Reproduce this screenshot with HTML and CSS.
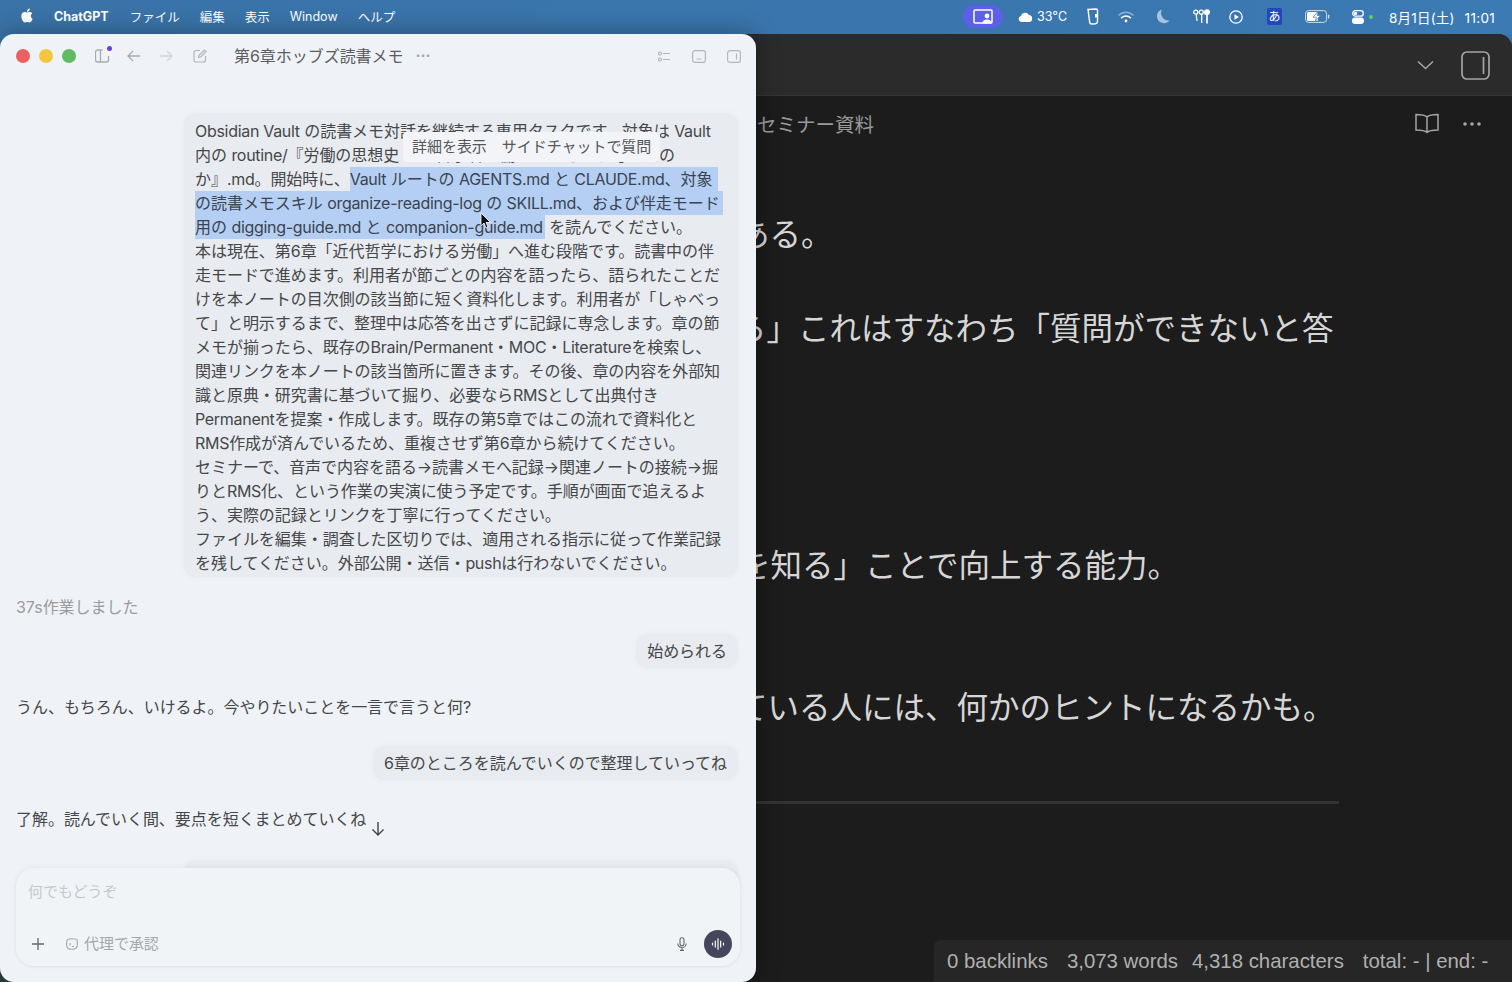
FILE: index.html

```html
<!DOCTYPE html>
<html lang="ja">
<head>
<meta charset="utf-8">
<title>第6章ホッブズ読書メモ</title>
<link rel="stylesheet" href="styles.css">
</head>
<body>

<!-- menu bar -->
<header class="menubar">
  <nav class="menu-left">
    <svg class="apple" viewBox="0 0 24 24"><path d="M12.152 6.896c-.948 0-2.415-1.078-3.96-1.04-2.04.027-3.91 1.183-4.961 3.014-2.117 3.675-.546 9.103 1.519 12.09 1.013 1.454 2.208 3.09 3.792 3.039 1.52-.065 2.09-.987 3.935-.987 1.831 0 2.35.987 3.96.948 1.637-.026 2.676-1.48 3.676-2.948 1.156-1.688 1.636-3.325 1.662-3.415-.039-.013-3.182-1.221-3.22-4.857-.026-3.04 2.48-4.494 2.597-4.559-1.429-2.09-3.623-2.324-4.39-2.376-2-.156-3.675 1.09-4.61 1.09zM15.53 3.83c.843-1.012 1.4-2.427 1.245-3.83-1.207.052-2.662.805-3.532 1.818-.78.896-1.454 2.338-1.273 3.714 1.338.104 2.715-.688 3.559-1.701"/></svg>
    <b class="app-name">ChatGPT</b>
    <span>ファイル</span>
    <span>編集</span>
    <span>表示</span>
    <span>Window</span>
    <span>ヘルプ</span>
  </nav>
  <div class="status">
    <span class="st-pill">
      <svg width="20" height="16" viewBox="0 0 20 16"><rect x="1" y="1" width="18" height="13" rx="1" fill="none" stroke="#fff" stroke-width="1.5"/><circle cx="14" cy="7" r="2.4" fill="#fff"/><path d="M9.500 14.500c0-3 2-4 4.500-4s4.500 1 4.500 4z" fill="#fff"/></svg>
    </span>
    <span class="st-weather">
      <svg width="15" height="10" viewBox="0 0 15 10"><path d="M3.500 10a3 3 0 0 1-.6-5.900 4.300 4.300 0 0 1 8-1A3.500 3.500 0 0 1 11.500 10z" fill="#fff"/></svg>
      33°C
    </span>
    <svg class="st-note" width="12" height="17" viewBox="0 0 12 17" fill="none" stroke="#fff" stroke-width="1.4"><path d="M1 1.500 9 1c1 0 1.500.5 1.500 1.500v11c0 1.500-.8 2-2 2.200l-4 .3c-1 0-1.500-.5-1.800-1.500z"/><rect x="8" y="6" width="3" height="3.500" fill="#fff" stroke="none"/></svg>
    <svg class="st-wifi" width="16" height="12" viewBox="0 0 16 12" fill="none" stroke="#fff" stroke-linecap="round"><path d="M1 4a10 10 0 0 1 14 0" stroke-width="1.500" opacity=".45"/><path d="M3.500 6.800a6.500 6.500 0 0 1 9 0" stroke-width="1.500"/><circle cx="8" cy="10" r="1.400" fill="#fff" stroke="none"/></svg>
    <svg class="st-moon" width="13" height="15" viewBox="0 0 13 15"><path d="M5 .5a7 7 0 1 0 7.500 11A7.500 7.500 0 0 1 5 .5z" fill="#a9c4e0"/></svg>
    <svg class="st-pods" width="17" height="15" viewBox="0 0 17 15" fill="none" stroke="#fff" stroke-width="1.300"><circle cx="2.800" cy="3.200" r="2"/><path d="M3.200 5.500 4 12"/><circle cx="8.300" cy="3.200" r="2"/><path d="M8.700 5.500v8.500"/><circle cx="14" cy="3.200" r="2.400" fill="#fff"/><path d="M14 5.500v9" stroke-width="1.700"/></svg>
    <svg class="st-play" width="14" height="14" viewBox="0 0 14 14"><circle cx="7" cy="7" r="6.200" fill="none" stroke="#fff" stroke-width="1.300"/><path d="M5.500 4.300 9.800 7 5.500 9.700z" fill="#fff"/></svg>
    <span class="st-ime">あ</span>
    <svg class="st-batt" width="25" height="13" viewBox="0 0 25 13"><rect x=".6" y=".6" width="21" height="11.800" rx="3" fill="none" stroke="#cfdcea" stroke-width="1"/><rect x="2" y="2" width="11" height="9" rx="1.500" fill="#fff"/><path d="M13 1.500 8 7.200h3.500L10 11.500l5.500-6H12z" fill="#fff" stroke="#3b78b0" stroke-width=".7"/><rect x="23" y="4.500" width="1.300" height="4" rx=".6" fill="#cfdcea"/></svg>
    <svg class="st-ctrl" width="12" height="14" viewBox="0 0 12 14"><rect x=".7" y=".7" width="10.600" height="5.400" rx="2.700" fill="none" stroke="#fff" stroke-width="1.300"/><circle cx="3.500" cy="3.400" r="1.700" fill="#fff"/><rect y="7.500" width="12" height="6.500" rx="3.200" fill="#fff"/></svg>
    <i class="st-dot"></i>
    <span class="st-clock">8月1日(土)<span class="st-time">11:01</span></span>
  </div>
</header>

<!-- desktop with the two windows -->
<main class="desktop">

  <section class="note-window">
    <div class="note-bar">
      <svg width="17" height="10" viewBox="0 0 17 10" fill="none" stroke="#a5a5a5" stroke-width="1.600"><path d="M1 1.500 8.500 8.500 16 1.500"/></svg>
      <svg class="panel-btn" width="29" height="29" viewBox="0 0 29 29" fill="none" stroke="#a5a5a5" stroke-width="1.700"><rect x="1" y="1" width="27" height="27" rx="5"/><path d="M22.500 6v17"/></svg>
    </div>
    <div class="note-head">
      <span class="note-path">セミナー資料</span>
      <div class="note-actions">
        <svg width="24" height="21" viewBox="0 0 24 21" fill="none" stroke="#a5a5a5" stroke-width="1.500"><path d="M12 4C10 2 6 1.500 1 1.500v15.500c5 0 9 .5 11 2.500 2-2 6-2.500 11-2.500V1.500C18 1.500 14 2 12 4zM12 4v15.500"/></svg>
        <svg width="18" height="4" viewBox="0 0 18 4" fill="#a5a5a5"><circle cx="2" cy="2" r="1.800"/><circle cx="9" cy="2" r="1.800"/><circle cx="16" cy="2" r="1.800"/></svg>
      </div>
    </div>
    <article class="note-body">
      <p class="line-a">ある。</p>
      <p class="line-b">ら」これはすなわち「質問ができないと答</p>
      <p class="line-c">を知る」ことで向上する能力。</p>
      <p class="line-d">ている人には、何かのヒントになるかも。</p>
      <hr class="note-rule">
    </article>
    <footer class="note-status">
      <span>0 backlinks</span>
      <span>3,073 words</span>
      <span class="near">4,318 characters</span>
      <span>total: - | end: -</span>
    </footer>
  </section>

  <section class="chat-window">
    <div class="chat-bar">
      <div class="lights"><i class="red"></i><i class="yellow"></i><i class="green"></i></div>
      <span class="sidebar-btn">
        <svg width="15" height="14" viewBox="0 0 15 14" fill="none" stroke="#aaa" stroke-width="1.300"><path d="M13.500 7v4a2 2 0 0 1-2 2h-9a2 2 0 0 1-2-2V3a2 2 0 0 1 2-2h5M5.500 1v12"/></svg>
        <i></i>
      </span>
      <svg class="nav-back" width="14" height="12" viewBox="0 0 14 12" fill="none" stroke="#aaa" stroke-width="1.300"><path d="M13 6H1M6 1 1 6l5 5"/></svg>
      <svg class="nav-fwd" width="14" height="12" viewBox="0 0 14 12" fill="none" stroke="#d2d4d8" stroke-width="1.300"><path d="M1 6h12M8 1l5 5-5 5"/></svg>
      <svg class="nav-edit" width="14" height="14" viewBox="0 0 14 14" fill="none" stroke="#b4b6ba" stroke-width="1.200"><path d="M7 1.500H3a2 2 0 0 0-2 2V11a2 2 0 0 0 2 2h7.500a2 2 0 0 0 2-2V7M5.500 8.500 6 6.300 11.500 1l1.500 1.500L7.700 8z"/></svg>
      <h1 class="chat-title">第6章ホッブズ読書メモ</h1>
      <span class="title-more">···</span>
      <div class="bar-right">
        <svg width="13" height="11" viewBox="0 0 13 11" fill="none" stroke="#b4b6ba" stroke-width="1.200"><circle cx="2" cy="2.500" r="1.500"/><circle cx="2" cy="8.500" r="1.500"/><path d="M5 2.500h7M5 8.500h7"/></svg>
        <svg width="14" height="13" viewBox="0 0 14 13" fill="none" stroke="#b4b6ba" stroke-width="1.200"><rect x=".6" y=".6" width="12.800" height="11.800" rx="2.500"/><path d="M4.500 9h5"/></svg>
        <svg width="14" height="13" viewBox="0 0 14 13" fill="none" stroke="#b4b6ba" stroke-width="1.200"><rect x=".6" y=".6" width="12.800" height="11.800" rx="2.500"/><path d="M9.500 3.500v6"/></svg>
      </div>
    </div>

    <div class="chat-log">
      <div class="bubble bubble-long">
        <span class="en">Obsidian Vault</span> の読書メモ対話を継続する専用タスクです。対象は <span class="en">Vault</span><br>
        内の <span class="en">routine/</span>『労働の思想史 ――哲学者は働くことをどう考えたの<br>
        か』<span class="en">.md</span>。開始時に、<span class="sel sel-a"><span class="en">Vault</span> ルートの <span class="en">AGENTS.md</span> と <span class="en">CLAUDE.md</span>、対象</span><br>
        <span class="sel sel-b">の読書メモスキル <span class="en">organize-reading-log</span> の <span class="en">SKILL.md</span>、および伴走モード</span><br>
        <span class="sel sel-c">用の <span class="en">digging-guide.md</span> と <span class="en">companion-guide.md</span></span> を読んでください。<br>
        本は現在、第6章「近代哲学における労働」へ進む段階です。読書中の伴<br>
        走モードで進めます。利用者が節ごとの内容を語ったら、語られたことだ<br>
        けを本ノートの目次側の該当節に短く資料化します。利用者が「しゃべっ<br>
        て」と明示するまで、整理中は応答を出さずに記録に専念します。章の節<br>
        メモが揃ったら、既存の<span class="en">Brain/Permanent</span>・<span class="en">MOC</span>・<span class="en">Literature</span>を検索し、<br>
        関連リンクを本ノートの該当箇所に置きます。その後、章の内容を外部知<br>
        識と原典・研究書に基づいて掘り、必要なら<span class="en">RMS</span>として出典付き<br>
        <span class="en">Permanent</span>を提案・作成します。既存の第5章ではこの流れで資料化と<br>
        <span class="en">RMS</span>作成が済んでいるため、重複させず第6章から続けてください。<br>
        セミナーで、音声で内容を語る→読書メモへ記録→関連ノートの接続→掘<br>
        りと<span class="en">RMS</span>化、という作業の実演に使う予定です。手順が画面で追えるよ<br>
        う、実際の記録とリンクを丁寧に行ってください。<br>
        ファイルを編集・調査した区切りでは、適用される指示に従って作業記録<br>
        を残してください。外部公開・送信・<span class="en">push</span>は行わないでください。
      </div>
      <p class="worked">37s作業しました</p>
      <div class="bubble bubble-short">始められる</div>
      <p class="reply">うん、もちろん、いけるよ。今やりたいことを一言で言うと何?</p>
      <div class="bubble bubble-short gap-big">6章のところを読んでいくので整理していってね</div>
      <p class="reply">了解。読んでいく間、要点を短くまとめていくね</p>
      <div class="bubble bubble-next">&nbsp;</div>
    </div>

    <!-- things lying over the log -->
    <div class="popover"><span>詳細を表示</span><span>サイドチャットで質問</span></div>
    <svg class="pointer" width="12" height="18" viewBox="0 0 12 18"><path d="M1 1v13l3-3 2 5 2-1-2-4.500h4.500z" fill="#111" stroke="#fff" stroke-width=".8"/></svg>
    <svg class="down-arrow" width="14" height="15" viewBox="0 0 14 15" fill="none" stroke="#444" stroke-width="1.400"><path d="M7 1v13M1.500 8.500 7 14l5.500-5.500"/></svg>

    <div class="composer">
      <div class="composer-input">何でもどうぞ</div>
      <div class="composer-tools">
        <svg class="plus" width="12" height="12" viewBox="0 0 12 12" stroke="#666" stroke-width="1.300"><path d="M6 0v12M0 6h12"/></svg>
        <svg class="approve-icon" width="12" height="13" viewBox="0 0 12 13" fill="none" stroke="#a5a7aa" stroke-width="1.100"><path d="M6 .8c3 0 5.200.6 5.200 1.500 0 1 .2 2.500.2 4 0 3-2.200 5-5.400 5S.6 10.300.6 7.300c0-1.500.2-3 .2-4C.8 1.400 3 .8 6 .8zM4 5v2.500M6 8.500h2"/></svg>
        <span class="approve">代理で承認</span>
        <svg class="mic" width="10" height="14" viewBox="0 0 10 14" fill="none" stroke="#666" stroke-width="1.100"><rect x="3" y=".7" width="4" height="8" rx="2"/><path d="M.8 6.500a4.200 4.200 0 0 0 8.400 0M5 10.700V13.500M3 13.400h4"/></svg>
        <span class="voice">
          <svg width="14" height="12" viewBox="0 0 14 12" stroke="#fff" stroke-width="1.200" stroke-linecap="round"><path d="M1.500 5v2M4.300 3v6M7 .8v10.400M9.700 3v6M12.500 5v2"/></svg>
        </span>
      </div>
    </div>
  </section>

</main>

</body>
</html>
```

FILE: styles.css

```css
* { box-sizing: border-box; }

html, body { height: 100%; margin: 0; }

body {
  display: flex;
  flex-direction: column;
  overflow: hidden;
  font-family: Inter, "Noto Sans CJK JP", sans-serif;
  background: #3a74a9;
}

p, h1 { margin: 0; font-weight: normal; }

/* menu bar */
.menubar {
  height: 34px;
  flex: none;
  display: flex;
  justify-content: space-between;
  align-items: center;
  padding: 0 17px 1px 20px;
  color: #fff;
  font-size: 12.500px;
  background: linear-gradient(90deg, #3a73a8, #3a76ad 60%, #3c7ab4);
}
.menu-left { display: flex; align-items: center; gap: 20px; }
.apple { width: 14px; height: 15px; fill: #fff; margin-bottom: 2px; }
.app-name { margin-right: 1px; font-weight: 700; }

.status { display: flex; align-items: center; }
.st-pill {
  width: 40px;
  height: 23px;
  display: flex;
  align-items: center;
  justify-content: center;
  border-radius: 12px;
  background: #5c60e6;
}
.st-weather { display: flex; align-items: center; gap: 4px; margin-left: 15px; }
.st-note { margin-left: 20px; }
.st-wifi { margin-left: 19px; }
.st-moon { margin-left: 23px; }
.st-pods { margin-left: 23px; }
.st-play { margin-left: 19px; }
.st-ime {
  width: 15px;
  height: 17px;
  margin-left: 24px;
  text-align: center;
  font-size: 12px;
  line-height: 17px;
  border-radius: 2px;
  background: #2146c0;
}
.st-batt { margin-left: 23px; }
.st-ctrl { margin-left: 22px; }
.st-dot { width: 4px; height: 4px; margin-left: 5px; border-radius: 50%; background: #5fce68; }
.st-clock { display: flex; align-items: baseline; margin-left: 16px; font-size: 13.500px; letter-spacing: .2px; }
.st-time { margin-left: 10px; letter-spacing: .3px; }

/* desktop */
.desktop {
  position: relative;
  flex: 1;
  background: linear-gradient(#3a74a9 60%, #2c403e 95%);
}

/* dark note window */
.note-window {
  position: absolute;
  inset: 0 0 0 30px;
  display: flex;
  flex-direction: column;
  overflow: hidden;
  border-radius: 14px 14px 0 0;
  background: #1c1c1d;
}
.note-bar {
  height: 62px;
  flex: none;
  display: flex;
  justify-content: flex-end;
  align-items: center;
  gap: 27px;
  padding: 0 22px 0 0;
  background: #2b2b2c;
  border-bottom: 1px solid #363636;
}
.panel-btn { margin-top: 1px; }
.note-head {
  height: 55px;
  flex: none;
  display: flex;
  justify-content: space-between;
  align-items: center;
  padding: 0 31px 0 727px;
}
.note-path { color: #9a9a9a; font-size: 19.500px; }
.note-actions { display: flex; align-items: center; gap: 24px; }

.note-body { flex: 1; padding-left: 708px; color: #d6d6d6; font-size: 31.500px; line-height: 44px; }
.note-body p { white-space: nowrap; }
.line-a { margin-top: 62px; }
.line-b { margin-top: 50px; margin-left: -3px; }
.line-c { margin-top: 193px; margin-left: 1px; }
.line-d { margin-top: 98px; margin-left: -2px; }
.note-rule {
  width: 601px;
  height: 3px;
  margin: 71px 0 0;
  border: 0;
  background: #333;
}

.note-status {
  position: absolute;
  right: 0;
  bottom: 0;
  width: 578px;
  height: 42px;
  display: flex;
  align-items: center;
  gap: 19px;
  padding-left: 13px;
  color: #b0b0b0;
  font-family: "Liberation Sans", sans-serif;
  font-size: 20.400px;
  border-radius: 6px 0 0 0;
  background: #262626;
}
.note-status .near { margin-left: -5px; }

/* chat window */
.chat-window {
  position: absolute;
  left: 0;
  top: 0;
  bottom: 0;
  width: 756px;
  overflow: hidden;
  color: #454749;
  font-size: 16px;
  line-height: 24px;
  letter-spacing: -.04px;
  border-radius: 14px;
  background: #eff2f6;
  box-shadow: 0 0 24px rgba(0, 0, 0, .35);
}
.chat-bar {
  height: 44px;
  display: flex;
  align-items: center;
  padding-left: 16px;
}
.lights { display: flex; gap: 9px; }
.lights i { width: 14px; height: 14px; border-radius: 50%; }
.red { background: #ec6060; }
.yellow { background: #f4c63d; }
.green { background: #5fbb62; }
.sidebar-btn { position: relative; display: flex; margin-left: 19px; }
.sidebar-btn i {
  position: absolute;
  top: -3px;
  right: -2px;
  width: 5px;
  height: 5px;
  border-radius: 50%;
  background: #6a3fe0;
}
.nav-back { margin-left: 17px; }
.nav-fwd { margin-left: 18px; }
.nav-edit { margin-left: 20px; }
.chat-title { margin-left: 27px; color: #5b5d60; font-size: 16px; }
.title-more { margin-left: 12px; color: #a5a7ab; font-size: 15px; font-weight: 700; }
.bar-right { margin-left: auto; padding-right: 15px; display: flex; align-items: center; gap: 21px; }

.chat-log {
  display: flex;
  flex-direction: column;
  align-items: flex-start;
  padding: 35px 18px 0 16px;
}
.en { letter-spacing: -.3px; }
.bubble {
  align-self: flex-end;
  padding: 5px 11px;
  border-radius: 12px;
  background: #e8ebef;
  box-shadow: 0 0 5px #e8ebef;
  white-space: nowrap;
}
.bubble-long { width: 554px; padding: 6px 11px 2px; }
.sel { display: inline-block; height: 24px; background: #b4cff3; color: #3a4350; }
.sel-a { padding-right: 5px; }
.sel-b { padding-right: 3px; }
.sel-c { padding-right: 2px; }
.worked { margin-top: 18px; color: #9a9c9f; }
.bubble-short { margin-top: 15px; }
.gap-big { margin-top: 27px; }
.reply { margin-top: 27px; }
.bubble-next { width: 554px; height: 40px; margin-top: 29px; }

.popover {
  position: absolute;
  left: 403px;
  top: 98px;
  width: 257px;
  height: 30px;
  display: flex;
  align-items: center;
  gap: 15px;
  padding-left: 9px;
  color: #55575a;
  font-size: 15px;
  border-radius: 4px;
  background: #f2f4f7;
}
.pointer { position: absolute; left: 480px; top: 178px; }
.down-arrow { position: absolute; left: 371px; top: 787px; }

.composer {
  position: absolute;
  left: 16px;
  right: 16px;
  bottom: 16px;
  height: 98px;
  display: flex;
  flex-direction: column;
  justify-content: space-between;
  padding: 12px 8px 8px 12px;
  border-radius: 18px;
  background: #f1f4f7;
  box-shadow: 0 -1px 5px rgba(0, 0, 0, .05), 0 1px 3px rgba(0, 0, 0, .05);
}
.composer-input { color: #c6c8cb; font-size: 15px; }
.composer-tools { display: flex; align-items: center; }
.plus { margin-left: 4px; }
.approve-icon { margin-left: 22px; }
.approve { margin-left: 6px; color: #a5a7aa; font-size: 15px; }
.mic { margin-left: auto; }
.voice {
  width: 28px;
  height: 28px;
  margin-left: 17px;
  display: flex;
  align-items: center;
  justify-content: center;
  border-radius: 50%;
  background: #45455c;
}
```
